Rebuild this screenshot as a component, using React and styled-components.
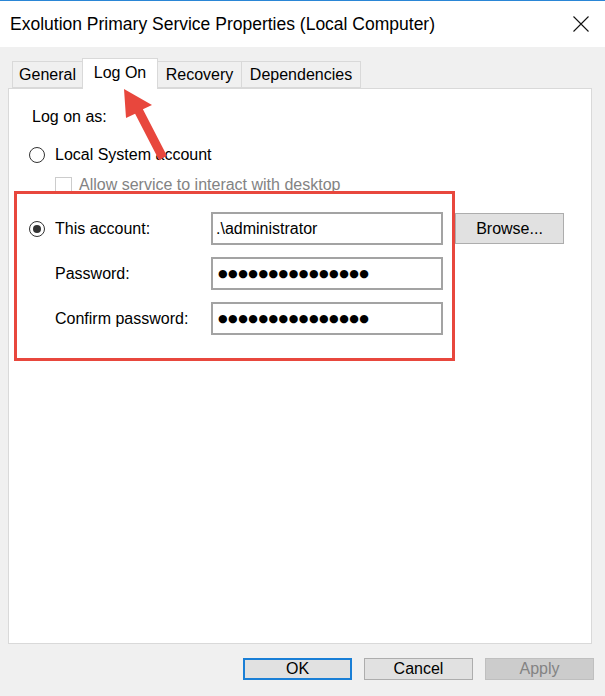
import React from 'react';
import styled, { createGlobalStyle } from 'styled-components';

const GlobalStyle = createGlobalStyle`
  html, body {
    margin: 0;
    padding: 0;
    background: #f0f0f0;
  }
  body {
    font-family: "Liberation Sans", Arial, sans-serif;
    color: #000;
  }
`;

const Window = styled.div`
  position: relative;
  width: 605px;
  height: 696px;
  display: flex;
  flex-direction: column;
  background: #f0f0f0;
  overflow: hidden;
`;

const TitleBar = styled.div`
  height: 46px;
  border-top: 1px solid #2a86d6;
  background: #fff;
  display: flex;
  align-items: center;
  justify-content: space-between;
  padding: 0 16px 0 10px;
`;

const Title = styled.div`
  font-size: 17.5px;
  color: #000;
`;

const CloseButton = styled.div`
  width: 16px;
  height: 16px;
  display: flex;
`;

const Body = styled.div`
  flex: 1;
  display: flex;
  flex-direction: column;
  padding: 11px 13px 0 8px;
`;

const TabStrip = styled.div`
  display: flex;
  align-items: flex-end;
  height: 30px;
  padding-left: 4px;
  position: relative;
  z-index: 1;
`;

const Tab = styled.div`
  box-sizing: border-box;
  width: ${({ $width }) => $width}px;
  height: ${({ $active }) => ($active ? 31 : 27)}px;
  margin-bottom: ${({ $active }) => ($active ? -1 : 0)}px;
  margin-left: -1px;
  border: 1px solid #d9d9d9;
  border-bottom: ${({ $active }) => ($active ? 'none' : '1px solid #d9d9d9')};
  background: ${({ $active }) => ($active ? '#fff' : '#f0f0f0')};
  display: flex;
  align-items: center;
  justify-content: center;
  padding-bottom: ${({ $active }) => ($active ? 3 : 0)}px;
  font-size: 16px;
  color: #000;
  &:first-child {
    margin-left: 0;
  }
`;

const Panel = styled.div`
  box-sizing: border-box;
  height: 556px;
  background: #fff;
  border: 1px solid #d9d9d9;
  padding: 18px 0 0 20px;
  display: flex;
  flex-direction: column;
`;

const Caption = styled.div`
  font-size: 16px;
  line-height: 20px;
  margin-left: 3px;
`;

const OptionRow = styled.div`
  display: flex;
  align-items: center;
  gap: 10px;
  height: 20px;
  margin-top: 18px;
  font-size: 16px;
`;

const Radio = styled.span`
  box-sizing: border-box;
  width: 16px;
  height: 16px;
  border-radius: 50%;
  border: 1px solid #333;
  background: #fff;
  display: flex;
  align-items: center;
  justify-content: center;
  flex-shrink: 0;
  &::after {
    content: '';
    width: 8px;
    height: 8px;
    border-radius: 50%;
    background: ${({ $checked }) => ($checked ? '#333' : 'transparent')};
  }
`;

const CheckRow = styled.div`
  display: flex;
  align-items: center;
  gap: 7px;
  height: 20px;
  margin-top: 10px;
  padding-left: 26px;
  font-size: 16px;
  color: #838383;
`;

const CheckBox = styled.span`
  box-sizing: border-box;
  width: 17px;
  height: 17px;
  border: 1px solid #cccccc;
  background: #fff;
  flex-shrink: 0;
`;

const AccountGrid = styled.div`
  margin-top: 17px;
  display: grid;
  grid-template-columns: 170px 232px 109px;
  grid-auto-rows: 33px;
  column-gap: 12px;
  row-gap: 12px;
  align-items: center;
  font-size: 16px;
`;

const FieldLabel = styled.div`
  display: flex;
  align-items: center;
  gap: 10px;
  padding-left: ${({ $indent }) => ($indent ? 26 : 0)}px;
`;

const TextBox = styled.div`
  box-sizing: border-box;
  height: 33px;
  border: 2px solid #a3a3a3;
  background: #fff;
  display: flex;
  align-items: center;
  padding-left: ${({ $masked }) => ($masked ? 5 : 3)}px;
  font-size: 16px;
`;

const Masked = styled.span`
  font-family: "DejaVu Sans", sans-serif;
  font-size: 11px;
  letter-spacing: 0.5px;
  color: #000;
`;

const Button = styled.div`
  box-sizing: border-box;
  width: 109px;
  height: ${({ $tall }) => ($tall ? 31 : 22)}px;
  background: ${({ $disabled }) => ($disabled ? '#cccccc' : '#e1e1e1')};
  border: ${({ $default, $disabled }) =>
    $default ? '2px solid #1a7fd6' : $disabled ? '1px solid #bfbfbf' : '1px solid #adadad'};
  color: ${({ $disabled }) => ($disabled ? '#838383' : '#000')};
  display: flex;
  align-items: center;
  justify-content: center;
  font-size: 16px;
`;

const Footer = styled.div`
  display: flex;
  justify-content: flex-end;
  gap: 12px;
  padding-top: 14px;
  margin-right: -2px;
`;

const Highlight = styled.div`
  position: absolute;
  left: 14px;
  top: 191px;
  width: 441px;
  height: 170px;
  box-sizing: border-box;
  border: 3px solid #e8473d;
  pointer-events: none;
`;

const Arrow = styled.svg`
  position: absolute;
  left: 110px;
  top: 82px;
  pointer-events: none;
`;

const dots = '●'.repeat(15);

export default function App() {
  return (
    <>
      <GlobalStyle />
      <Window>
        <TitleBar>
          <Title>Exolution Primary Service Properties (Local Computer)</Title>
          <CloseButton>
            <svg width="16" height="16" viewBox="0 0 16 16">
              <path d="M0.5 0.5 L15.5 15.5 M15.5 0.5 L0.5 15.5" stroke="#111" strokeWidth="1.1" />
            </svg>
          </CloseButton>
        </TitleBar>
        <Body>
          <TabStrip>
            <Tab $width={71}>General</Tab>
            <Tab $width={76} $active>Log On</Tab>
            <Tab $width={85}>Recovery</Tab>
            <Tab $width={120}>Dependencies</Tab>
          </TabStrip>
          <Panel>
            <Caption>Log on as:</Caption>
            <OptionRow>
              <Radio />
              Local System account
            </OptionRow>
            <CheckRow>
              <CheckBox />
              Allow service to interact with desktop
            </CheckRow>
            <AccountGrid>
              <FieldLabel>
                <Radio $checked />
                This account:
              </FieldLabel>
              <TextBox>.\administrator</TextBox>
              <Button $tall>Browse...</Button>
              <FieldLabel $indent>Password:</FieldLabel>
              <TextBox $masked>
                <Masked>{dots}</Masked>
              </TextBox>
              <span />
              <FieldLabel $indent>Confirm password:</FieldLabel>
              <TextBox $masked>
                <Masked>{dots}</Masked>
              </TextBox>
            </AccountGrid>
          </Panel>
          <Footer>
            <Button $default>OK</Button>
            <Button>Cancel</Button>
            <Button $disabled>Apply</Button>
          </Footer>
        </Body>
        <Highlight />
        <Arrow width="62" height="84" viewBox="110 82 62 84">
          <polygon
            points="124,89 126,118 135.1,113.7 159.1,160.2 166.9,155.8 142.9,109.3 152,105"
            fill="#e8473d"
          />
        </Arrow>
      </Window>
    </>
  );
}
